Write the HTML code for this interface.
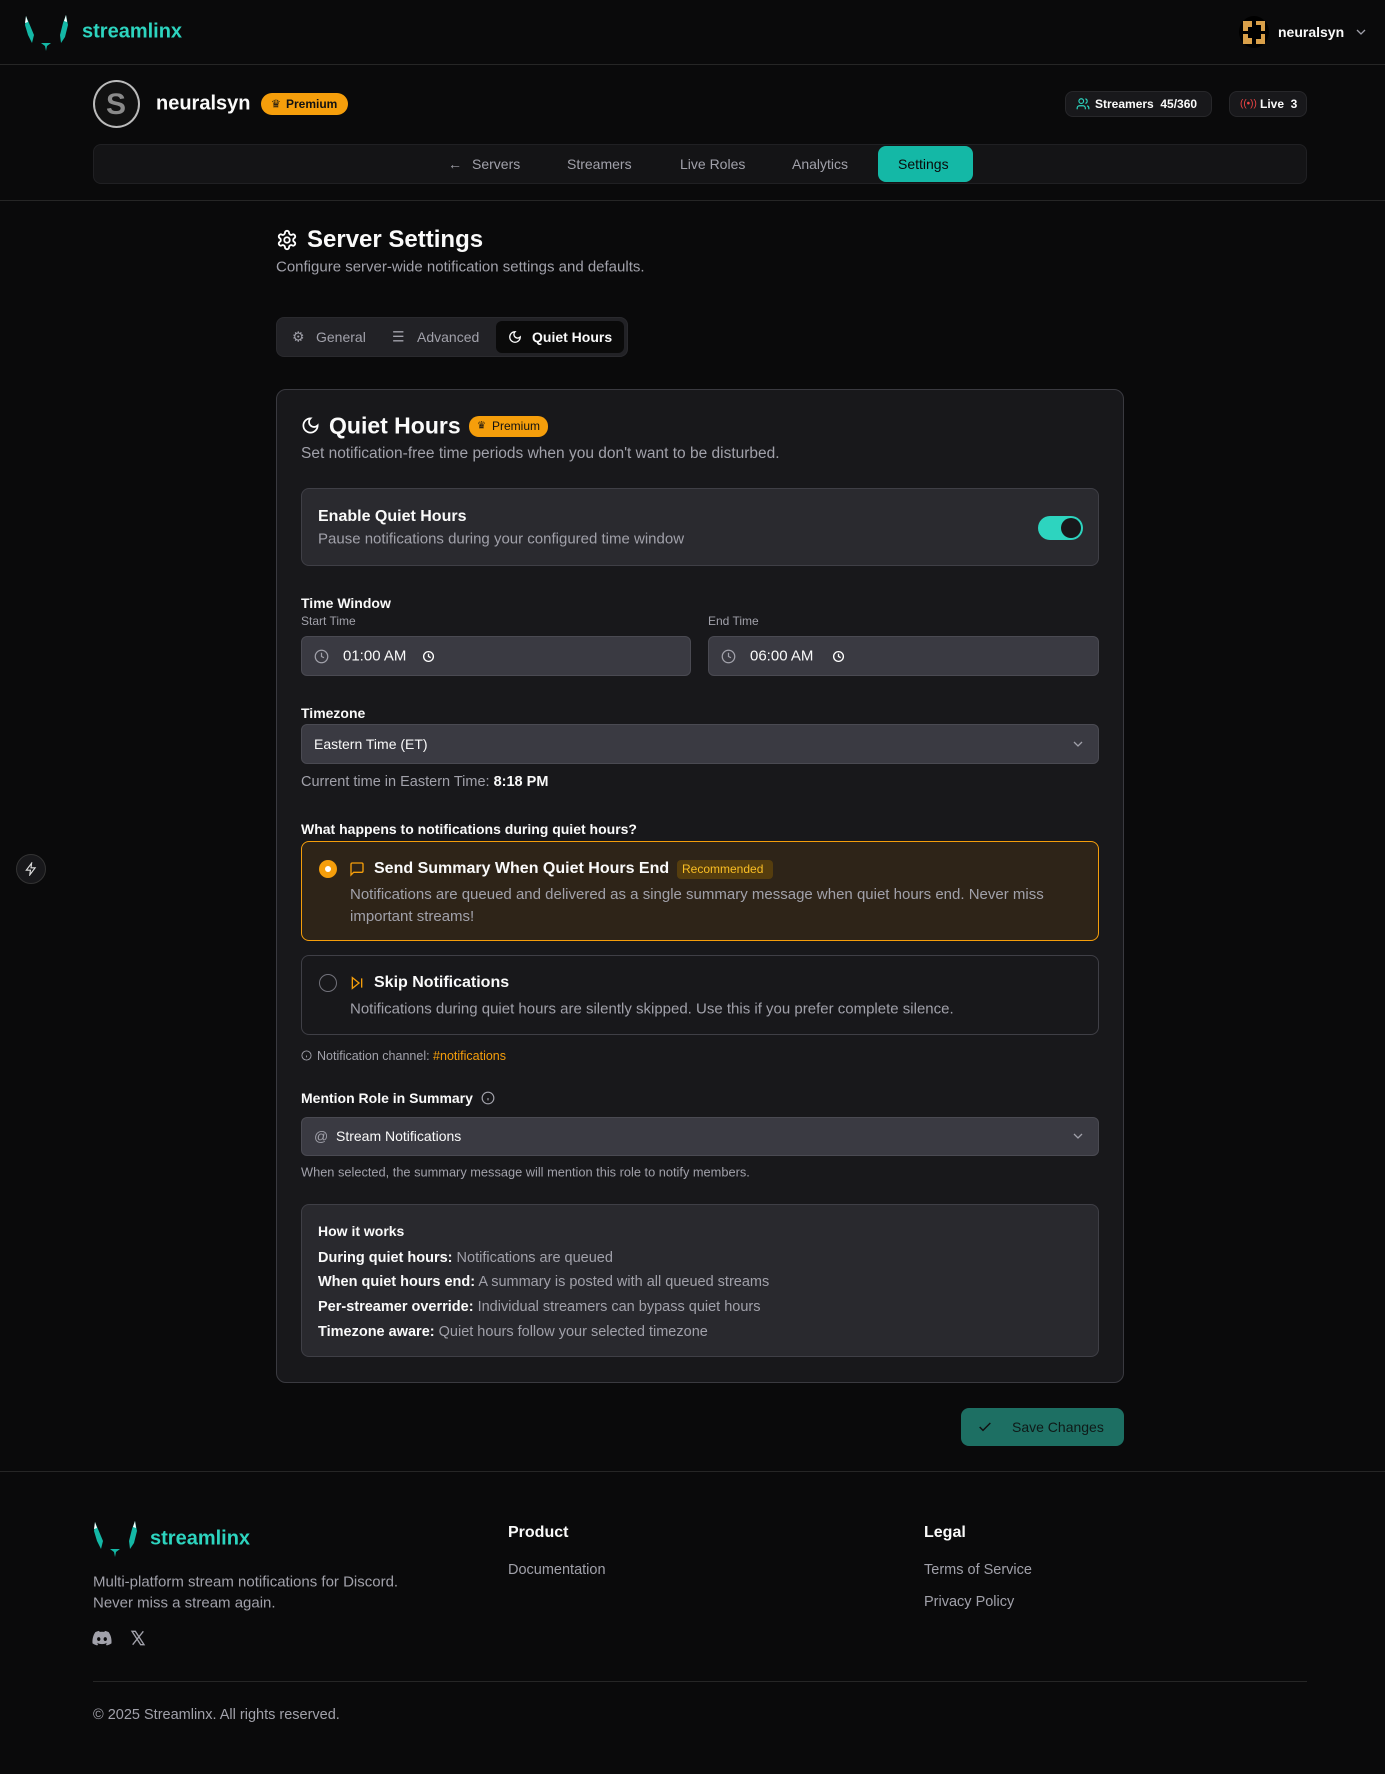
<!DOCTYPE html>
<html><head><meta charset="utf-8"><style>
*{box-sizing:border-box;margin:0;padding:0}
body{width:1385px;height:1774px;background:#0a0a0b;font-family:"Liberation Sans",sans-serif;color:#fafafa;position:relative;overflow:hidden}
.a{position:absolute}
.c{position:absolute;transform:translateY(-50%);white-space:nowrap}
.g{color:#a1a1aa}
.b{font-weight:bold}
svg{display:block}
</style></head><body>

<!-- top header -->
<div class="a" style="left:0;top:64px;width:1385px;height:1px;background:#262626"></div>
<svg class="a" style="left:23px;top:13px" width="52" height="38" viewBox="0 0 52 38"><path d="M3 3 L6 10 L11 22 L9 30 L5 22 L2 12Z" fill="#14b8a6"/><path d="M3 3 L5 9 L2 10Z" fill="#fff"/><path d="M43 2 L45 12 L42 24 L38 30 L37 22 L40 10Z" fill="#14b8a6"/><path d="M43 2 L44 9 L41 8Z" fill="#fff"/><path d="M18 30 L28 30 L24 33 L23 38 L22 33Z" fill="#14b8a6"/></svg>
<div class="c b" style="left:82px;top:32px;font-size:20px;color:#2dd4bf">streamlinx</div>
<svg class="a" style="left:1239px;top:16px" width="30" height="32" viewBox="0 0 30 32"><ellipse cx="15" cy="16" rx="15" ry="16" fill="#000"/><path d="M4 5h9v6H9v4H4z M17 5h9v10h-4V9h-5z M4 18h5v4h4v6H4z M22 18h4v10h-9v-5h5z" fill="#d9a04a"/></svg>
<div class="c b" style="left:1278px;top:32px;font-size:14px">neuralsyn</div>
<svg class="a" style="left:1355px;top:27px" width="12" height="10" viewBox="0 0 12 10"><path d="M2 3l4 4 4-4" stroke="#a1a1aa" stroke-width="1.3" fill="none"/></svg>

<!-- profile -->
<div class="a" style="left:93px;top:80px;width:47px;height:48px;border-radius:50%;background:#111;border:2px solid #bbb"></div>
<div class="c b" style="left:106px;top:105px;font-size:30px;color:#8a8a8a">S</div>
<div class="c b" style="left:156px;top:104px;font-size:20px">neuralsyn</div>
<div class="a" style="left:261px;top:93px;width:87px;height:22px;border-radius:11px;background:#f59e0b"></div>
<div class="c" style="left:271px;top:104px;font-size:11px;color:#111">♛</div>
<div class="c b" style="left:286px;top:104px;font-size:12px;color:#111">Premium</div>

<div class="a" style="left:1065px;top:91px;width:147px;height:26px;border-radius:8px;background:#18181b;border:1px solid #27272a"></div>
<svg class="a" style="left:1076px;top:97px" width="14" height="14" viewBox="0 0 24 24" fill="none" stroke="#2dd4bf" stroke-width="2"><circle cx="9" cy="7" r="4"/><path d="M2 21v-2a4 4 0 0 1 4-4h6a4 4 0 0 1 4 4v2M16 3.1a4 4 0 0 1 0 7.8M22 21v-2a4 4 0 0 0-3-3.9"/></svg>
<div class="c b" style="left:1095px;top:104px;font-size:12px">Streamers&nbsp; 45/360</div>
<div class="a" style="left:1229px;top:91px;width:78px;height:26px;border-radius:8px;background:#18181b;border:1px solid #27272a"></div>
<div class="c" style="left:1240px;top:104px;font-size:10px;color:#ef4444">((•))</div>
<div class="c b" style="left:1260px;top:104px;font-size:12px">Live&nbsp; 3</div>

<!-- nav -->
<div class="a" style="left:93px;top:144px;width:1214px;height:40px;border-radius:8px;background:#141416;border:1px solid #202023"></div>
<div class="c" style="left:448px;top:164px;font-size:14px;color:#a1a1aa">←</div>
<div class="c" style="left:472px;top:164px;font-size:14px;color:#a1a1aa">Servers</div>
<div class="c" style="left:567px;top:164px;font-size:14px;color:#a1a1aa">Streamers</div>
<div class="c" style="left:680px;top:164px;font-size:14px;color:#a1a1aa">Live Roles</div>
<div class="c" style="left:792px;top:164px;font-size:14px;color:#a1a1aa">Analytics</div>
<div class="a" style="left:878px;top:146px;width:95px;height:36px;border-radius:8px;background:#14b8a6"></div>
<div class="c" style="left:898px;top:164px;font-size:14px;color:#0a0a0a">Settings</div>
<div class="a" style="left:0;top:200px;width:1385px;height:1px;background:#262626"></div>

<!-- floating -->
<div class="a" style="left:16px;top:854px;width:30px;height:30px;border-radius:50%;background:#18181b;border:1px solid #333"></div>
<svg class="a" style="left:24px;top:862px" width="14" height="14" viewBox="0 0 24 24" fill="none" stroke="#ddd" stroke-width="2"><path d="M13 2L4 14h7l-1 8 9-12h-7z"/></svg>

<!-- title -->
<svg class="a" style="left:276px;top:229px" width="22" height="22" viewBox="0 0 24 24" fill="none" stroke="#fff" stroke-width="2"><circle cx="12" cy="12" r="3"/><path d="M12.2 2h-.4a2 2 0 0 0-2 2v.2a2 2 0 0 1-1 1.7l-.4.3a2 2 0 0 1-2 0l-.2-.1a2 2 0 0 0-2.7.7l-.2.4a2 2 0 0 0 .7 2.7l.2.1a2 2 0 0 1 1 1.7v.5a2 2 0 0 1-1 1.8l-.2.1a2 2 0 0 0-.7 2.7l.2.4a2 2 0 0 0 2.7.7l.2-.1a2 2 0 0 1 2 0l.4.3a2 2 0 0 1 1 1.7v.2a2 2 0 0 0 2 2h.4a2 2 0 0 0 2-2v-.2a2 2 0 0 1 1-1.7l.4-.3a2 2 0 0 1 2 0l.2.1a2 2 0 0 0 2.7-.7l.2-.4a2 2 0 0 0-.7-2.7l-.2-.1a2 2 0 0 1-1-1.8v-.5a2 2 0 0 1 1-1.7l.2-.1a2 2 0 0 0 .7-2.7l-.2-.4a2 2 0 0 0-2.7-.7l-.2.1a2 2 0 0 1-2 0l-.4-.3a2 2 0 0 1-1-1.7V4a2 2 0 0 0-2-2z"/></svg>
<div class="c b" style="left:307px;top:240px;font-size:24px">Server Settings</div>
<div class="c g" style="left:276px;top:267px;font-size:15px">Configure server-wide notification settings and defaults.</div>

<!-- tabs -->
<div class="a" style="left:276px;top:317px;width:352px;height:40px;border-radius:8px;background:#222226;border:1px solid #2a2a2e"></div>
<div class="a" style="left:496px;top:321px;width:128px;height:32px;border-radius:6px;background:#0a0a0a"></div>
<div class="c g" style="left:292px;top:337px;font-size:14px">⚙</div>
<div class="c g" style="left:316px;top:337px;font-size:14px">General</div>
<div class="c g" style="left:392px;top:337px;font-size:14px">☰</div>
<div class="c g" style="left:417px;top:337px;font-size:14px">Advanced</div>
<svg class="a" style="left:508px;top:330px" width="14" height="14" viewBox="0 0 24 24" fill="none" stroke="#fff" stroke-width="2.2"><path d="M12 3a6 6 0 0 0 9 9 9 9 0 1 1-9-9z"/></svg>
<div class="c b" style="left:532px;top:337px;font-size:14px">Quiet Hours</div>

<!-- card -->
<div class="a" style="left:276px;top:389px;width:848px;height:994px;border-radius:10px;background:#18181b;border:1px solid #3a3a40"></div>
<svg class="a" style="left:301px;top:416px" width="19" height="19" viewBox="0 0 24 24" fill="none" stroke="#fff" stroke-width="2.2"><path d="M12 3a6 6 0 0 0 9 9 9 9 0 1 1-9-9z"/></svg>
<div class="c b" style="left:329px;top:426px;font-size:23px">Quiet Hours</div>
<div class="a" style="left:469px;top:416px;width:79px;height:21px;border-radius:10px;background:#f59e0b"></div>
<div class="c" style="left:477px;top:426px;font-size:10px;color:#111">♛</div>
<div class="c" style="left:492px;top:426px;font-size:12px;color:#111">Premium</div>
<div class="c g" style="left:301px;top:454px;font-size:15.5px">Set notification-free time periods when you don't want to be disturbed.</div>

<div class="a" style="left:301px;top:488px;width:798px;height:78px;border-radius:8px;background:#2a2a2f;border:1px solid #3f3f46"></div>
<div class="c b" style="left:318px;top:517px;font-size:16px">Enable Quiet Hours</div>
<div class="c g" style="left:318px;top:539px;font-size:15px">Pause notifications during your configured time window</div>
<div class="a" style="left:1038px;top:516px;width:45px;height:24px;border-radius:12px;background:#2dd4bf"></div>
<div class="a" style="left:1061px;top:518px;width:20px;height:20px;border-radius:50%;background:#18181b"></div>

<div class="c b" style="left:301px;top:603px;font-size:14px">Time Window</div>
<div class="c g" style="left:301px;top:621px;font-size:12px">Start Time</div>
<div class="c g" style="left:708px;top:621px;font-size:12px">End Time</div>
<div class="a" style="left:301px;top:636px;width:390px;height:40px;border-radius:6px;background:#3a3a42;border:1px solid #4a4a52"></div>
<div class="a" style="left:708px;top:636px;width:391px;height:40px;border-radius:6px;background:#3a3a42;border:1px solid #4a4a52"></div>
<svg class="a" style="left:314px;top:649px" width="15" height="15" viewBox="0 0 24 24" fill="none" stroke="#a1a1aa" stroke-width="2"><circle cx="12" cy="12" r="10"/><path d="M12 6v6l4 2"/></svg>
<div class="c" style="left:343px;top:656px;font-size:15px">01:00 AM</div>
<svg class="a" style="left:422px;top:650px" width="13" height="13" viewBox="0 0 24 24" fill="none" stroke="#fff" stroke-width="2.5"><circle cx="12" cy="12" r="9"/><path d="M12 7v5l4 2"/></svg>
<svg class="a" style="left:721px;top:649px" width="15" height="15" viewBox="0 0 24 24" fill="none" stroke="#a1a1aa" stroke-width="2"><circle cx="12" cy="12" r="10"/><path d="M12 6v6l4 2"/></svg>
<div class="c" style="left:750px;top:656px;font-size:15px">06:00 AM</div>
<svg class="a" style="left:832px;top:650px" width="13" height="13" viewBox="0 0 24 24" fill="none" stroke="#fff" stroke-width="2.5"><circle cx="12" cy="12" r="9"/><path d="M12 7v5l4 2"/></svg>

<div class="c b" style="left:301px;top:713px;font-size:14px">Timezone</div>
<div class="a" style="left:301px;top:724px;width:798px;height:40px;border-radius:6px;background:#3a3a42;border:1px solid #4a4a52"></div>
<div class="c" style="left:314px;top:744px;font-size:14px">Eastern Time (ET)</div>
<svg class="a" style="left:1072px;top:739px" width="12" height="10" viewBox="0 0 12 10"><path d="M2 3l4 4 4-4" stroke="#a1a1aa" stroke-width="1.3" fill="none"/></svg>
<div class="c" style="left:301px;top:782px;font-size:14.5px"><span class="g">Current time in Eastern Time: </span><b>8:18 PM</b></div>

<div class="c b" style="left:301px;top:829px;font-size:14px">What happens to notifications during quiet hours?</div>
<div class="a" style="left:301px;top:841px;width:798px;height:100px;border-radius:8px;background:#2e2418;border:1px solid #f59e0b"></div>
<div class="a" style="left:319px;top:860px;width:18px;height:18px;border-radius:50%;background:#f59e0b"></div>
<div class="a" style="left:325px;top:866px;width:6px;height:6px;border-radius:50%;background:#fff"></div>
<svg class="a" style="left:349px;top:861px" width="16" height="16" viewBox="0 0 24 24" fill="none" stroke="#f59e0b" stroke-width="2"><path d="M21 15a2 2 0 0 1-2 2H7l-4 4V5a2 2 0 0 1 2-2h14a2 2 0 0 1 2 2z"/></svg>
<div class="c b" style="left:374px;top:869px;font-size:16px">Send Summary When Quiet Hours End</div>
<div class="a" style="left:677px;top:860px;width:96px;height:19px;border-radius:4px;background:#553d0e"></div>
<div class="c" style="left:682px;top:869px;font-size:12px;color:#fbbf24">Recommended</div>
<div class="a g" style="left:350px;top:884px;width:730px;font-size:15px;line-height:22px">Notifications are queued and delivered as a single summary message when quiet hours end. Never miss important streams!</div>

<div class="a" style="left:301px;top:955px;width:798px;height:80px;border-radius:8px;border:1px solid #3f3f46"></div>
<div class="a" style="left:319px;top:974px;width:18px;height:18px;border-radius:50%;border:1.5px solid #71717a"></div>
<svg class="a" style="left:349px;top:975px" width="16" height="16" viewBox="0 0 24 24" fill="none" stroke="#f59e0b" stroke-width="2"><path d="M5 4l10 8-10 8z M19 5v14"/></svg>
<div class="c b" style="left:374px;top:983px;font-size:16px">Skip Notifications</div>
<div class="c g" style="left:350px;top:1009px;font-size:15px">Notifications during quiet hours are silently skipped. Use this if you prefer complete silence.</div>

<svg class="a" style="left:301px;top:1050px" width="11" height="11" viewBox="0 0 24 24" fill="none" stroke="#a1a1aa" stroke-width="2"><circle cx="12" cy="12" r="10"/><path d="M12 16v-4M12 8h.01"/></svg>
<div class="c" style="left:317px;top:1056px;font-size:12.5px"><span class="g">Notification channel: </span><span style="color:#f59e0b">#notifications</span></div>

<div class="c b" style="left:301px;top:1098px;font-size:14px">Mention Role in Summary</div>
<svg class="a" style="left:481px;top:1091px" width="14" height="14" viewBox="0 0 24 24" fill="none" stroke="#a1a1aa" stroke-width="2"><circle cx="12" cy="12" r="10"/><path d="M12 16v-4M12 8h.01"/></svg>
<div class="a" style="left:301px;top:1117px;width:798px;height:39px;border-radius:6px;background:#3a3a42;border:1px solid #4a4a52"></div>
<div class="c g" style="left:314px;top:1136px;font-size:14px">@</div>
<div class="c" style="left:336px;top:1136px;font-size:14px">Stream Notifications</div>
<svg class="a" style="left:1072px;top:1131px" width="12" height="10" viewBox="0 0 12 10"><path d="M2 3l4 4 4-4" stroke="#a1a1aa" stroke-width="1.3" fill="none"/></svg>
<div class="c g" style="left:301px;top:1172px;font-size:12.8px">When selected, the summary message will mention this role to notify members.</div>

<div class="a" style="left:301px;top:1204px;width:798px;height:153px;border-radius:8px;background:#29292e;border:1px solid #3f3f46"></div>
<div class="c b" style="left:318px;top:1231px;font-size:14px">How it works</div>
<div class="c" style="left:318px;top:1258px;font-size:14.5px"><b>During quiet hours:</b> <span class="g">Notifications are queued</span></div>
<div class="c" style="left:318px;top:1282px;font-size:14.5px"><b>When quiet hours end:</b> <span class="g">A summary is posted with all queued streams</span></div>
<div class="c" style="left:318px;top:1307px;font-size:14.5px"><b>Per-streamer override:</b> <span class="g">Individual streamers can bypass quiet hours</span></div>
<div class="c" style="left:318px;top:1332px;font-size:14.5px"><b>Timezone aware:</b> <span class="g">Quiet hours follow your selected timezone</span></div>

<!-- save -->
<div class="a" style="left:961px;top:1408px;width:163px;height:38px;border-radius:8px;background:#1d6f63"></div>
<svg class="a" style="left:977px;top:1419px" width="16" height="16" viewBox="0 0 24 24" fill="none" stroke="#111" stroke-width="2.2"><path d="M4 12l5 5L20 6"/></svg>
<div class="c" style="left:1012px;top:1427px;font-size:14px;color:#0f1a18">Save Changes</div>

<!-- footer -->
<div class="a" style="left:0;top:1471px;width:1385px;height:1px;background:#262626"></div>
<svg class="a" style="left:92px;top:1519px" width="52" height="38" viewBox="0 0 52 38"><path d="M3 3 L6 10 L11 22 L9 30 L5 22 L2 12Z" fill="#14b8a6"/><path d="M3 3 L5 9 L2 10Z" fill="#fff"/><path d="M43 2 L45 12 L42 24 L38 30 L37 22 L40 10Z" fill="#14b8a6"/><path d="M43 2 L44 9 L41 8Z" fill="#fff"/><path d="M18 30 L28 30 L24 33 L23 38 L22 33Z" fill="#14b8a6"/></svg>
<div class="c b" style="left:150px;top:1539px;font-size:20px;color:#2dd4bf">streamlinx</div>
<div class="c g" style="left:93px;top:1582px;font-size:15px">Multi-platform stream notifications for Discord.</div>
<div class="c g" style="left:93px;top:1603px;font-size:15px">Never miss a stream again.</div>
<svg class="a" style="left:92px;top:1630px" width="20" height="16" viewBox="0 0 24 18"><path d="M20 2A19 19 0 0 0 15.5.5l-.6 1.2a17 17 0 0 0-5.8 0L8.5.5A19 19 0 0 0 4 2C1 6.5.3 11 .6 15.4A19 19 0 0 0 6.3 18l1.2-1.9-1.9-.9.5-.4a13 13 0 0 0 11.8 0l.5.4-1.9.9 1.2 1.9a19 19 0 0 0 5.7-2.6C23.8 10.3 22.6 5.8 20 2zM8.1 12.6c-1.1 0-2-1-2-2.3s.9-2.3 2-2.3 2 1 2 2.3-.9 2.3-2 2.3zm7.8 0c-1.1 0-2-1-2-2.3s.9-2.3 2-2.3 2 1 2 2.3-.9 2.3-2 2.3z" fill="#a1a1aa"/></svg>
<svg class="a" style="left:130px;top:1630px" width="16" height="16" viewBox="0 0 24 24"><path d="M3 2h5l13 20h-5zM20 2L4 22" stroke="#a1a1aa" stroke-width="2" fill="none"/></svg>
<div class="c b" style="left:508px;top:1533px;font-size:16px">Product</div>
<div class="c g" style="left:508px;top:1570px;font-size:14.5px">Documentation</div>
<div class="c b" style="left:924px;top:1533px;font-size:16px">Legal</div>
<div class="c g" style="left:924px;top:1570px;font-size:14.5px">Terms of Service</div>
<div class="c g" style="left:924px;top:1602px;font-size:14.5px">Privacy Policy</div>
<div class="a" style="left:93px;top:1681px;width:1214px;height:1px;background:#262626"></div>
<div class="c g" style="left:93px;top:1715px;font-size:14.5px">© 2025 Streamlinx. All rights reserved.</div>
</body></html>
